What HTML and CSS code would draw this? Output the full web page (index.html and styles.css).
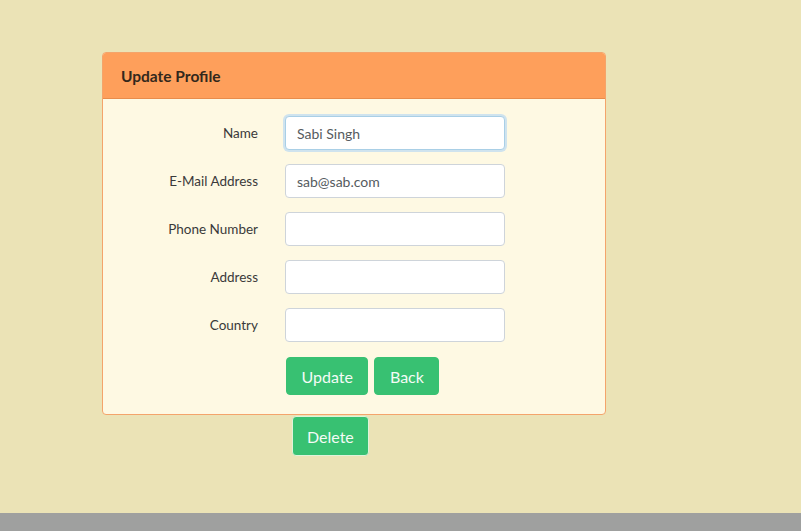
FILE: index.html
```html
<!DOCTYPE html>
<html>
<head>
<meta charset="utf-8">
<link rel="stylesheet" href="styles.css">
</head>
<body>
<div class="page">
  <main class="content">
    <div class="card">
      <div class="card-header">Update Profile</div>
      <form class="card-body">
        <div class="row">
          <label class="label">Name</label>
          <input class="input focus" type="text" value="Sabi Singh">
        </div>
        <div class="row">
          <label class="label">E-Mail Address</label>
          <input class="input" type="text" value="sab@sab.com">
        </div>
        <div class="row">
          <label class="label">Phone Number</label>
          <input class="input" type="text" value="">
        </div>
        <div class="row">
          <label class="label">Address</label>
          <input class="input" type="text" value="">
        </div>
        <div class="row">
          <label class="label">Country</label>
          <input class="input" type="text" value="">
        </div>
        <div class="actions">
          <button type="button" class="btn">Update</button>
          <button type="button" class="btn">Back</button>
        </div>
      </form>
    </div>
    <div class="delete-row">
      <button type="button" class="btn btn-delete">Delete</button>
    </div>
  </main>
  <footer class="bar"></footer>
</div>
</body>
</html>
```
FILE: styles.css
```css
html, body {
  margin: 0;
  padding: 0;
}
body {
  background: #ebe3b6;
  font-family: Lato, "Open Sans", sans-serif;
  color: #212529;
}
.page {
  height: 531px;
  display: flex;
  flex-direction: column;
}
.content {
  flex: 1;
  padding: 52px 0 0 102px;
}
.card {
  width: 502px;
  border: 1px solid #f4a46b;
  border-radius: 4px;
  background: #fef9e3;
  overflow: hidden;
}
.card-header {
  background: #fe9f5b;
  border-bottom: 1px solid #e88c4c;
  height: 46px;
  box-sizing: border-box;
  padding: 0 18px;
  display: flex;
  align-items: center;
  font-size: 15.5px;
  font-weight: 700;
  color: #33281c;
}
.card-body {
  display: flex;
  flex-direction: column;
  gap: 14px;
  padding: 17px 0 19px 0;
  margin: 0;
}
.row {
  display: flex;
  align-items: center;
  gap: 27px;
}
.label {
  width: 155px;
  text-align: right;
  font-size: 13.5px;
  color: #3a3a3a;
}
.input {
  width: 220px;
  height: 34px;
  box-sizing: border-box;
  border: 1px solid #ced4da;
  border-radius: 4px;
  background: #fff;
  padding: 0 11px;
  font-family: Lato, "Open Sans", sans-serif;
  font-size: 14px;
  color: #555b60;
  outline: none;
}
.input.focus {
  border-color: #a9cfe6;
  box-shadow: 0 0 0 2px #cfe3ee;
}
.actions {
  display: flex;
  gap: 6px;
  padding-left: 183px;
  margin-top: 1px;
}
.btn {
  height: 38px;
  border: 1px solid #38c172;
  border-radius: 4px;
  background: #38c172;
  color: #f4fbf6;
  font-family: Lato, "Open Sans", sans-serif;
  font-size: 16px;
  padding: 0 14.5px;
  cursor: pointer;
}
.delete-row {
  padding: 1px 0 0 190px;
}
.btn-delete {
  height: 40px;
  padding: 0 14px;
  border: 1px solid #dff3da;
}
.bar {
  height: 18px;
  background: #9fa09f;
}
```
